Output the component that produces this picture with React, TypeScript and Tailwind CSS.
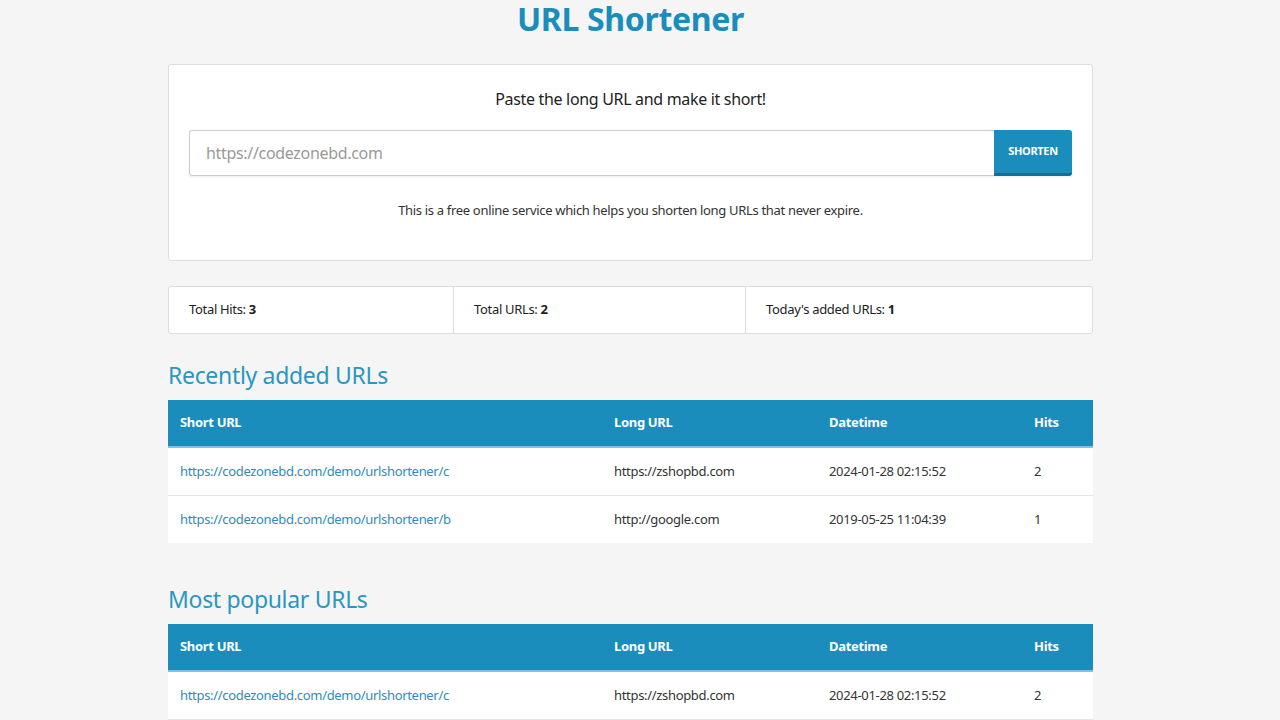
const rows = [
  { short: "https://codezonebd.com/demo/urlshortener/c", long: "https://zshopbd.com", dt: "2024-01-28 02:15:52", hits: 2 },
  { short: "https://codezonebd.com/demo/urlshortener/b", long: "http://google.com", dt: "2019-05-25 11:04:39", hits: 1 },
];

function UrlTable({ data }: { data: typeof rows }) {
  return (
    <table className="w-full border-collapse bg-white text-[13px] text-[#333]">
      <thead>
        <tr className="bg-[#1a8dbd] text-white font-bold h-[47px] border-b-2 border-[#7ec0dd]">
          <th className="text-left px-3 w-[434px]">Short URL</th>
          <th className="text-left px-3 w-[215px]">Long URL</th>
          <th className="text-left px-3 w-[205px]">Datetime</th>
          <th className="text-left px-3">Hits</th>
        </tr>
      </thead>
      <tbody>
        {data.map((r, i) => (
          <tr key={i} className="h-[48px] border-b border-[#e4e4e4] last:border-b-0">
            <td className="px-3 text-[#2a8dbd]">{r.short}</td>
            <td className="px-3">{r.long}</td>
            <td className="px-3">{r.dt}</td>
            <td className="px-3">{r.hits}</td>
          </tr>
        ))}
      </tbody>
    </table>
  );
}

export default function App() {
  return (
    <div className="min-h-screen bg-[#f5f5f5] font-['Lato',sans-serif] tracking-[-0.02em]">
      <div className="ml-[168px] w-[925px]">
        <h1 className="text-center text-[32px] font-bold text-[#1a8dbd] leading-[38px]">URL Shortener</h1>
        <div className="mt-[26px] bg-white border border-[#ddd] rounded-[3px] h-[197px] px-5 pt-[22px]">
          <p className="text-center text-[16px] text-[#222]">Paste the long URL and make it short!</p>
          <div className="mt-[19px] flex h-[46px] shadow-[0_1px_2px_rgba(0,0,0,0.08)]">
            <input
              className="flex-1 border border-[#ccc] border-r-0 rounded-l-[3px] px-4 text-[16px] outline-none placeholder:text-[#999]"
              placeholder="https://codezonebd.com"
            />
            <button className="w-[78px] bg-[#1a8dbd] border-b-[3px] border-[#146f95] rounded-r-[3px] text-white text-[11px] font-bold">
              SHORTEN
            </button>
          </div>
          <p className="mt-[25px] text-center text-[13px] text-[#333]">
            This is a free online service which helps you shorten long URLs that never expire.
          </p>
        </div>
        <div className="mt-[25px] grid grid-cols-[285px_292px_1fr] bg-white border border-[#ddd] rounded-[3px] h-[48px] text-[13px] text-[#222]">
          <div className="flex items-center px-5 border-r border-[#ddd]">Total Hits:&nbsp;<b>3</b></div>
          <div className="flex items-center px-5 border-r border-[#ddd]">Total URLs:&nbsp;<b>2</b></div>
          <div className="flex items-center px-5">Today's added URLs:&nbsp;<b>1</b></div>
        </div>
        <h2 className="mt-[26px] mb-[10px] text-[23px] text-[#2a96c4] leading-[30px]">Recently added URLs</h2>
        <UrlTable data={rows} />
        <h2 className="mt-[41px] mb-[10px] text-[23px] text-[#2a96c4] leading-[30px]">Most popular URLs</h2>
        <UrlTable data={rows} />
      </div>
    </div>
  );
}
